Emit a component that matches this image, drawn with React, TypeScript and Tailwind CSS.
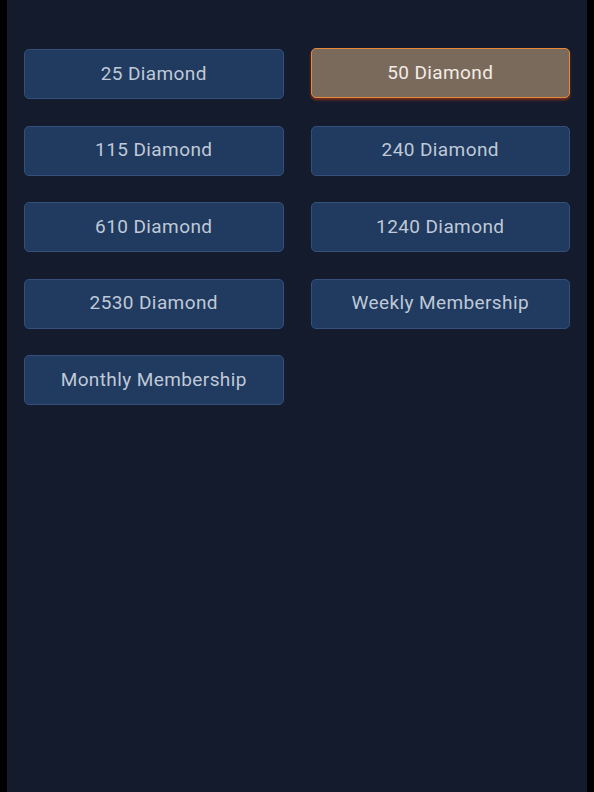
import React, { useState } from 'react';

const packages = [
  '25 Diamond',
  '50 Diamond',
  '115 Diamond',
  '240 Diamond',
  '610 Diamond',
  '1240 Diamond',
  '2530 Diamond',
  'Weekly Membership',
  'Monthly Membership',
];

export default function App() {
  const [selected, setSelected] = useState('50 Diamond');

  return (
    <div className="min-h-[792px] w-full bg-black px-[7px]" style={{ fontFamily: 'Roboto, "Liberation Sans", sans-serif' }}>
      <div className="min-h-[792px] bg-[#141b2d] px-[17px] pt-[49px]">
        <div className="grid grid-cols-2 gap-x-[27px] gap-y-[26.5px]">
          {packages.map((p) => (
            <button
              key={p}
              type="button"
              onClick={() => setSelected(p)}
              className={`h-[50px] rounded-[5px] border text-[19px] tracking-[0.4px] ${
                selected === p
                  ? 'border-[#e8893a] bg-[#7a6a5c] text-[#f3ece6] shadow-[0_2px_3px_rgba(190,60,20,0.6)] -translate-y-px'
                  : 'border-[#34507a] bg-[#213a5f] text-[#bfc9d8]'
              }`}
            >
              {p}
            </button>
          ))}
        </div>
      </div>
    </div>
  );
}
